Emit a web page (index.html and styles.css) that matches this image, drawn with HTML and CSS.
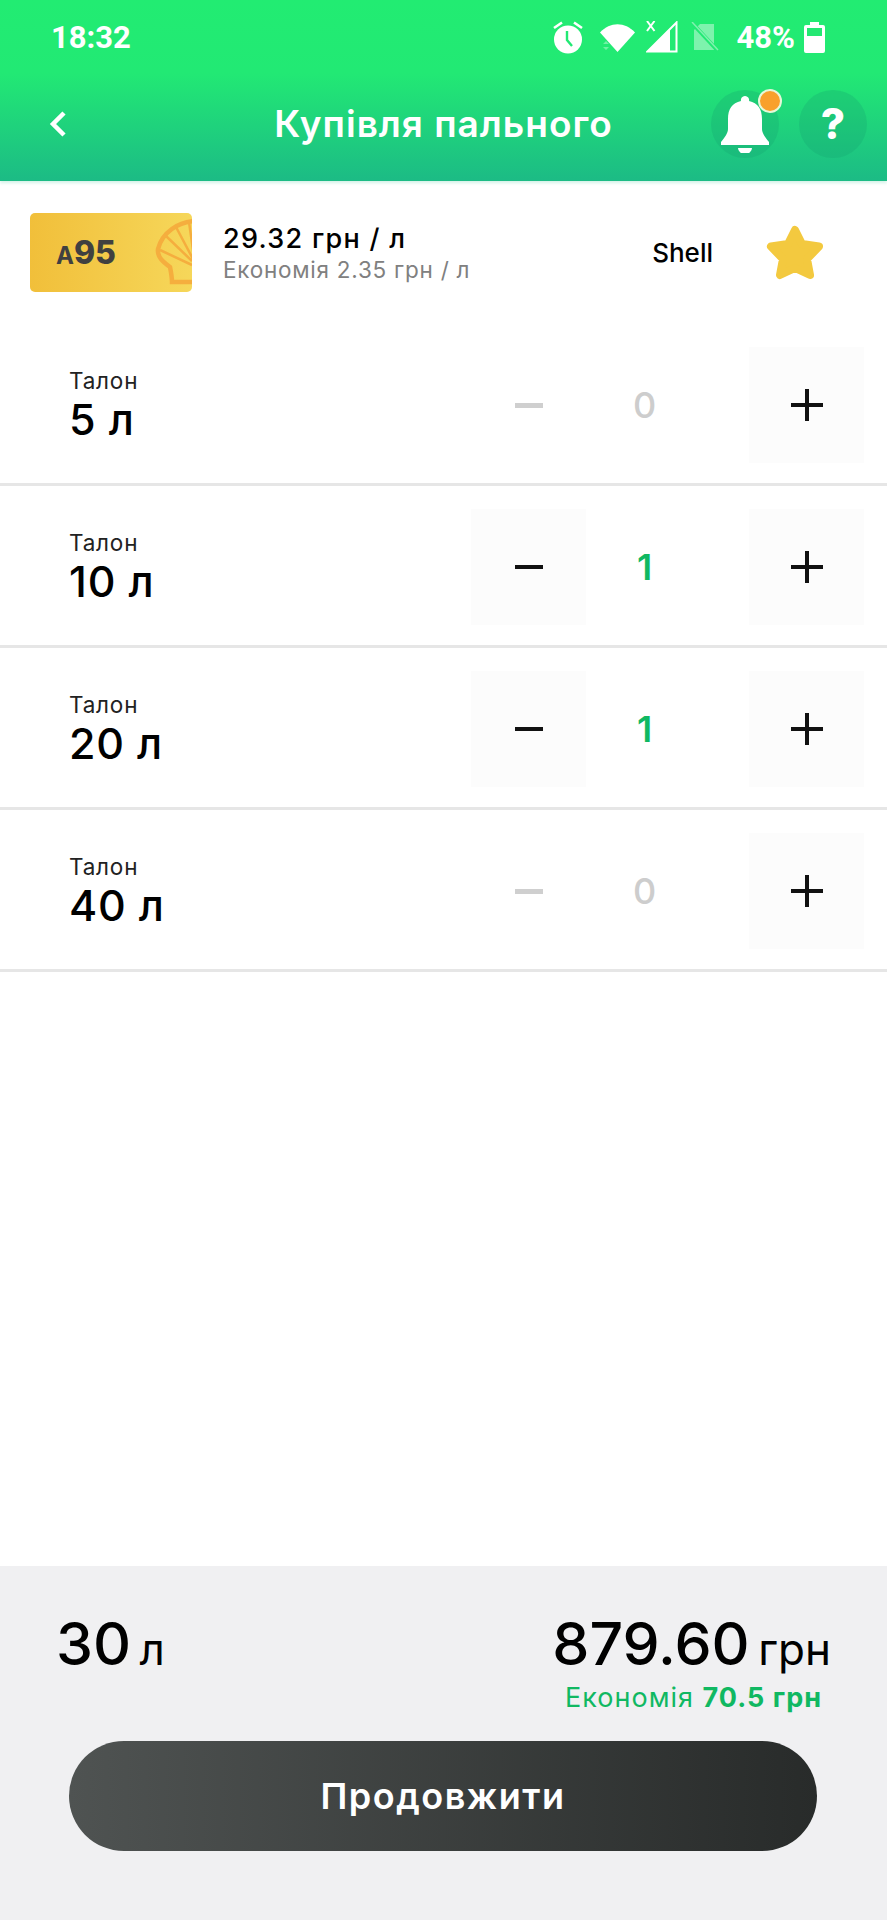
FILE: index.html
```html
<!DOCTYPE html>
<html lang="uk">
<head>
<meta charset="utf-8">
<title>Купівля пального</title>
<link rel="stylesheet" href="styles.css">
</head>
<body>
<div class="screen">
  <header class="header">
    <div class="status">
      <span class="time">18:32</span>
      <div class="status-icons">
        <svg class="ic-alarm" width="32" height="33" viewBox="0 0 32 33"><path d="M2 7 10 1.500M30 7 22 1.500" stroke="#fff" stroke-width="2.600" fill="none"/><circle cx="16" cy="18.500" r="14" fill="#fff"/><path d="M15 10v9l5 6" stroke="#22e974" stroke-width="2.400" fill="none"/></svg>
        <svg class="ic-wifi" width="35" height="29" viewBox="0 0 35 29"><path d="M0 9.500C10-1.500 25-1.500 35 9.500L17.500 29Z" fill="#fff"/><path d="M3 15l3-3 3 3ZM3 18l3 3 3-3Z" fill="#fff" opacity=".35" transform="translate(0 6)"/></svg>
        <svg class="ic-signal" width="32" height="32" viewBox="0 0 32 32"><path d="M30.500 1.500V30.500H1.500Z" fill="none" stroke="#fff" stroke-width="2"/><path d="M24 8.500V30H2Z" fill="#fff"/><path d="M1 1l7.500 10M8.500 1 1 11" stroke="#fff" stroke-width="2" transform="translate(0 -1)" fill="none"/></svg>
        <svg class="ic-sim" width="28" height="30" viewBox="0 0 28 30"><path d="M9 2h14v26H3V8Z" fill="#fff" opacity=".42"/><path d="M1 1 27 29" stroke="#22e974" stroke-width="4"/><path d="M1 0 27 28" stroke="#fff" stroke-width="1.500" opacity=".42"/></svg>
        <span class="battery-text">48%</span>
        <svg class="ic-battery" width="21" height="31" viewBox="0 0 21 31"><path d="M6 0h9v3h4a2 2 0 0 1 2 2v24a2 2 0 0 1-2 2H2a2 2 0 0 1-2-2V5a2 2 0 0 1 2-2h4Z" fill="#fff"/><rect x="3" y="6" width="15" height="8" fill="#23e872"/></svg>
      </div>
    </div>
    <nav class="nav">
      <svg class="back" width="21" height="28" viewBox="0 0 21 28"><path d="M17 3 6 14l11 11" fill="none" stroke="#fff" stroke-width="4.500"/></svg>
      <h1 class="title">Купівля пального</h1>
      <div class="nav-actions">
        <div class="round-btn">
          <svg width="50" height="58" viewBox="0 0 50 58"><path d="M25 1a4 4 0 0 1 4 5c9 2 13 8 13 18v10c0 4 3 8 7 13v3H1v-3c4-5 7-9 7-13V24C8 14 12 8 21 6a4 4 0 0 1 4-5Z" fill="#fff"/><path d="M18 53h14a7 6 0 0 1-14 0Z" fill="#fff"/></svg>
          <span class="badge"></span>
        </div>
        <div class="round-btn"><span class="question">?</span></div>
      </div>
    </nav>
  </header>

  <section class="fuel">
    <div class="fuel-card">
      <span class="fuel-grade"><small>A</small>95</span>
      <svg class="shell" width="40" height="79" viewBox="0 0 40 79"><g fill="none" stroke="#f5ae3e" stroke-width="4.500"><path d="M45 8C26 8 10 20 6 36c-1 8 5 13 12 18 1 5 2 11 2 15h26"/><path d="M8 37 40 52M14 23 40 48M24 14 41 46M37 9 42 44" stroke-width="2.500"/></g></svg>
    </div>
    <div class="fuel-info">
      <div class="fuel-price">29.32 грн / л</div>
      <div class="fuel-save">Економія 2.35 грн / л</div>
    </div>
    <div class="fuel-brand">Shell</div>
    <svg class="star" width="58" height="56" viewBox="0 0 58 56"><path d="M29 5 36 19 53 21.500 41 34 44 50 29 43 14 50 17 34 5 21.500 22 19Z" fill="#f3c93f" stroke="#f3c93f" stroke-width="8" stroke-linejoin="round"/></svg>
  </section>

  <section class="rows">
    <div class="row">
      <div class="row-label"><div class="row-kind">Талон</div><div class="row-vol">5 л</div></div>
      <div class="stepper">
        <div class="step is-off"><span class="minus"></span></div>
        <div class="count is-zero">0</div>
        <div class="step"><span class="plus"></span></div>
      </div>
    </div>
    <div class="row">
      <div class="row-label"><div class="row-kind">Талон</div><div class="row-vol">10 л</div></div>
      <div class="stepper">
        <div class="step"><span class="minus"></span></div>
        <div class="count">1</div>
        <div class="step"><span class="plus"></span></div>
      </div>
    </div>
    <div class="row">
      <div class="row-label"><div class="row-kind">Талон</div><div class="row-vol">20 л</div></div>
      <div class="stepper">
        <div class="step"><span class="minus"></span></div>
        <div class="count">1</div>
        <div class="step"><span class="plus"></span></div>
      </div>
    </div>
    <div class="row">
      <div class="row-label"><div class="row-kind">Талон</div><div class="row-vol">40 л</div></div>
      <div class="stepper">
        <div class="step is-off"><span class="minus"></span></div>
        <div class="count is-zero">0</div>
        <div class="step"><span class="plus"></span></div>
      </div>
    </div>
  </section>

  <footer class="footer">
    <div class="totals">
      <div class="total-vol"><b>30</b> <span>л</span></div>
      <div class="total-right">
        <div class="total-price"><b>879.60</b> <span>грн</span></div>
        <div class="total-save">Економія <b>70.5 грн</b></div>
      </div>
    </div>
    <button class="cta">Продовжити</button>
  </footer>
</div>
</body>
</html>
```
FILE: styles.css
```css
* { box-sizing: border-box; }
html, body { margin: 0; padding: 0; background: #fff; }
body { font-family: Inter, "Noto Sans", sans-serif; color: #000; }
.screen { width: 887px; height: 1920px; display: flex; flex-direction: column; overflow: hidden; }

.header { height: 181px; flex: none; background: linear-gradient(180deg, #22ec72 0%, #22e974 40%, #1cbb85 100%); box-shadow: 0 2px 3px rgba(29,187,133,.2); position: relative; z-index: 1; }
.status { height: 72px; display: flex; align-items: center; justify-content: space-between; padding: 2px 62px 0 51px; color: #fff; }
.time { font: 700 31px Roboto, sans-serif; }
.status-icons { display: flex; align-items: center; }
.ic-alarm { margin-right: 16px; }
.ic-wifi { margin-right: 11px; }
.ic-signal { margin-right: 13px; }
.ic-sim { margin-right: 18px; }
.battery-text { font: 700 31px Roboto, sans-serif; margin-right: 9px; }

.nav { height: 109px; display: grid; grid-template-columns: 1fr auto 1fr; align-items: center; padding: 0 20px 6px; }
.title { margin: 0; font-size: 37px; line-height: 44px; font-weight: 600; color: #fff; letter-spacing: 1px; }
.nav-actions { display: flex; justify-content: flex-end; gap: 20px; }
.back { justify-self: start; margin-left: 27px; }
.round-btn { width: 68px; height: 68px; border-radius: 50%; background: rgba(20,160,110,.28); display: flex; align-items: center; justify-content: center; position: relative; }
.question { color: #fff; font-size: 42px; font-weight: 800; line-height: 1; }
.badge { position: absolute; left: 47px; top: -1px; width: 24px; height: 24px; border-radius: 50%; background: #f9a02b; border: 2px solid #e6f7d9; }

.fuel { height: 143px; flex: none; display: flex; align-items: center; padding-left: 30px; }
.fuel-card { width: 162px; height: 79px; border-radius: 5px; background: linear-gradient(90deg, #f1bf3a, #f6d75a); position: relative; overflow: hidden; display: flex; align-items: center; padding-left: 26px; flex: none; }
.fuel-grade { font-size: 32px; font-weight: 800; color: #404040; line-height: 1; }
.fuel-grade small { font-size: 24px; font-weight: 700; }
.shell { position: absolute; right: 0; top: 0; }
.fuel-info { margin-left: 31px; flex: 1; }
.fuel-price { font-size: 27px; line-height: 34px; font-weight: 500; letter-spacing: 1.300px; }
.fuel-save { font-size: 22.500px; line-height: 28px; color: #808080; font-weight: 400; letter-spacing: .75px; }
.fuel-brand { font-size: 26px; font-weight: 500; margin-right: 53px; }
.star { margin-right: 63px; }

.rows { display: flex; flex-direction: column; }
.row { height: 162px; display: flex; align-items: center; justify-content: space-between; border-bottom: 3px solid #e6e6e6; padding: 3px 23px 0 69px; }
.row-kind { font-size: 22.500px; line-height: 28px; font-weight: 400; color: #222; letter-spacing: .8px; }
.row-vol { font-size: 43px; line-height: 48px; font-weight: 500; letter-spacing: .8px; }
.stepper { display: flex; align-items: center; }
.step { width: 115px; height: 116px; background: #fcfcfc; display: flex; align-items: center; justify-content: center; }
.step.is-off { background: transparent; }
.minus { width: 28px; height: 4px; background: #111; display: block; }
.is-off .minus { background: #cfcfcf; height: 5px; }
.plus { width: 32px; height: 32px; position: relative; display: block; background: linear-gradient(#111, #111) center / 32px 4px no-repeat, linear-gradient(#111, #111) center / 4px 32px no-repeat; }
.count { width: 163px; padding-right: 46px; text-align: center; font-size: 36px; font-weight: 600; color: #10b862; }
.count.is-zero { color: #cdcdcd; font-weight: 500; }

.footer { margin-top: auto; height: 354px; flex: none; background: #f0f0f2; padding: 44px 70px 0 56px; }
.totals { display: flex; justify-content: space-between; align-items: flex-start; height: 131px; }
.total-vol b, .total-price b { font-size: 59px; line-height: 68px; font-weight: 500; }
.total-vol span, .total-price span { font-size: 44px; font-weight: 400; margin-left: 4px; }
.total-right { text-align: right; margin-right: -14px; }
.total-save { font-size: 27px; line-height: 32px; color: #10b862; margin-top: 4px; margin-right: 9px; letter-spacing: 1px; }
.total-save b { font-weight: 700; }
.cta { display: block; width: 748px; height: 110px; margin-left: 13px; border: 0; border-radius: 55px; background: linear-gradient(90deg, #4f5352, #282b2a); color: #fff; font: 600 36px Inter, sans-serif; letter-spacing: 1.500px; }
```
